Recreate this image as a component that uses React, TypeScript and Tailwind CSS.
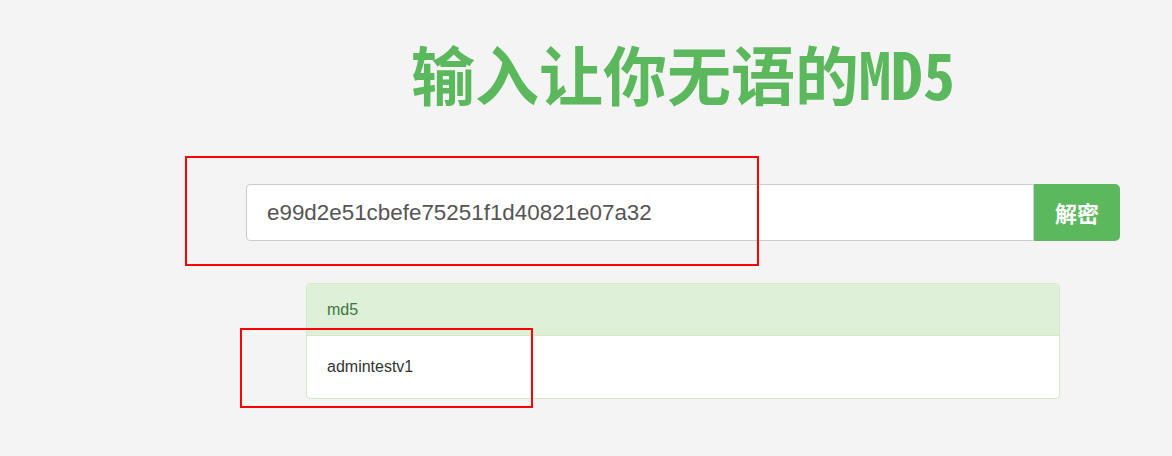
export default function App() {
  return (
    <div className="relative h-[456px] w-full overflow-hidden bg-[#f4f4f4] font-['Liberation_Sans','Noto_Sans_CJK_SC',sans-serif]">
      <div className="ml-[246px] flex w-[874px] flex-col">
        <h1 className="mt-[40px] text-center text-[64px] leading-[64px] font-bold text-[#5cb85c] font-['Noto_Sans_CJK_SC',sans-serif]">
          输入让你无语的<span className="font-['Noto_Sans_Mono_CJK_SC','Noto_Sans_CJK_SC',monospace]">MD5</span>
        </h1>

        <div className="mt-[80px] flex h-[57px]">
          <div className="flex flex-1 items-center rounded-l-[4px] border border-[#ccc] bg-white px-[20px] text-[22.4px] text-[#555]">
            e99d2e51cbefe75251f1d40821e07a32
          </div>
          <button className="w-[86px] rounded-r-[5px] bg-[#5cb85c] text-[22px] font-bold text-white font-['Noto_Sans_CJK_SC',sans-serif]">
            解密
          </button>
        </div>

        <div className="mx-[60px] mt-[42px] overflow-hidden rounded-[4px] border border-[#d6e9c6] bg-white">
          <div className="flex h-[52px] items-center border-b border-[#d6e9c6] bg-[#dff0d8] px-[20px] text-[16px] text-[#3c763d]">
            md5
          </div>
          <div className="flex h-[62px] items-center px-[20px] text-[16px] text-[#333]">
            admintestv1
          </div>
        </div>
      </div>

      <div className="absolute left-[185px] top-[156px] h-[110px] w-[574px] border-2 border-[#ff0000]" />
      <div className="absolute left-[240px] top-[328px] h-[80px] w-[293px] border-2 border-[#ff0000]" />
    </div>
  )
}
